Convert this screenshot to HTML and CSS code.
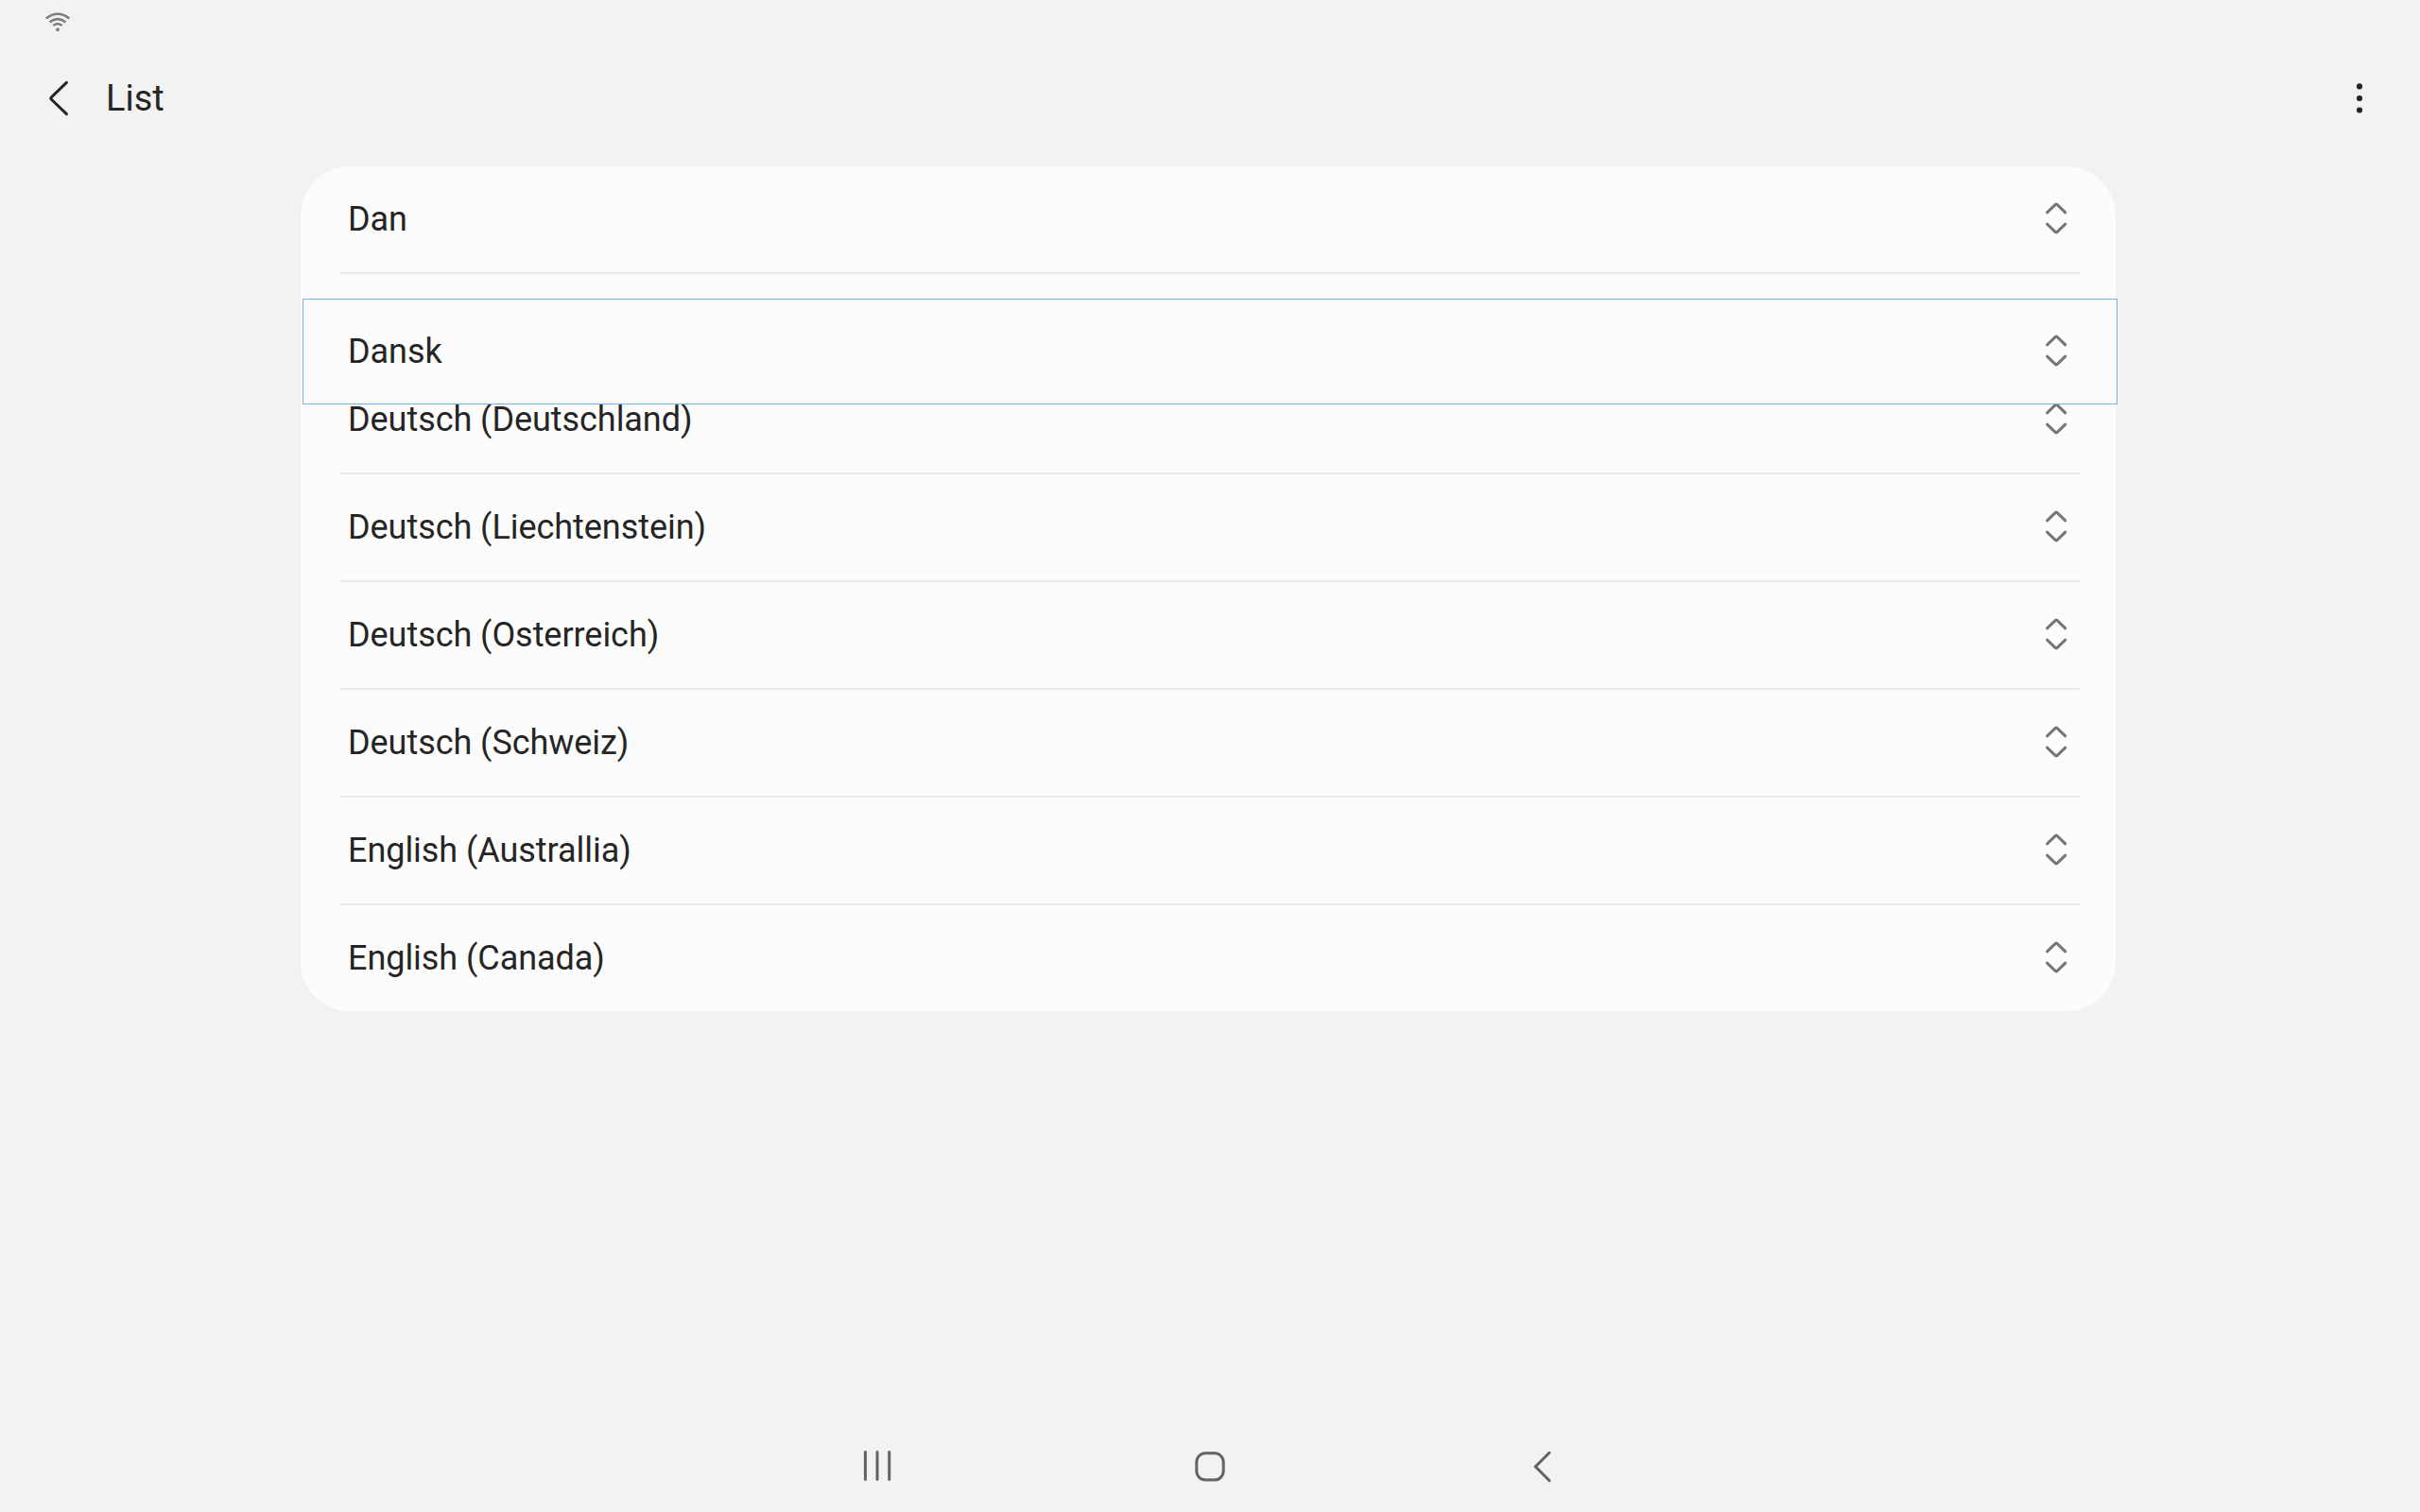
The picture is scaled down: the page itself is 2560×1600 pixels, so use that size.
FILE: index.html
```html
<!DOCTYPE html>
<html lang="en">
<head>
<meta charset="utf-8">
<title>List</title>
<link rel="stylesheet" href="styles.css">
</head>
<body>
<svg class="defs" aria-hidden="true">
  <symbol id="reorder" viewBox="0 0 48 48">
    <path d="M14.6 16.8 23.4 8.3Q24.2 7.6 25 8.3L33.8 16.8M14.6 29.1 23.4 37.6Q24.2 38.3 25 37.6L33.8 29.1"/>
  </symbol>
</svg>
<div class="screen">
  <div class="status">
    <svg class="wifi" viewBox="0 0 28 22">
      <path d="M1.8 7.6Q14-2 26.2 7.6M5.6 11.5Q14 4.8 22.4 11.5M9.3 15Q14 11.6 18.7 15"/>
      <circle cx="14" cy="19.3" r="1.9"/>
    </svg>
  </div>
  <header class="appbar">
    <svg class="back" viewBox="0 0 48 48"><path d="M30.4 7.4 14.4 22.8Q13.2 24 14.4 25.2L30.4 40.6"/></svg>
    <h1 class="title">List</h1>
    <svg class="more" viewBox="0 0 48 48"><circle cx="24" cy="11.4" r="3.1"/><circle cx="24" cy="24" r="3.1"/><circle cx="24" cy="36.5" r="3.1"/></svg>
  </header>
  <main class="content">
    <ul class="card">
      <li class="row"><span>Dan</span><svg class="handle"><use href="#reorder"/></svg></li>
      <li class="slot">
        <div class="dragged"><span>Dansk</span><svg class="handle"><use href="#reorder"/></svg></div>
      </li>
      <li class="row"><span>Deutsch (Deutschland)</span><svg class="handle"><use href="#reorder"/></svg></li>
      <li class="row"><span>Deutsch (Liechtenstein)</span><svg class="handle"><use href="#reorder"/></svg></li>
      <li class="row"><span>Deutsch (Osterreich)</span><svg class="handle"><use href="#reorder"/></svg></li>
      <li class="row"><span>Deutsch (Schweiz)</span><svg class="handle"><use href="#reorder"/></svg></li>
      <li class="row"><span>English (Australlia)</span><svg class="handle"><use href="#reorder"/></svg></li>
      <li class="row"><span>English (Canada)</span><svg class="handle"><use href="#reorder"/></svg></li>
    </ul>
  </main>
  <nav class="navbar">
    <svg class="nav-icon" viewBox="0 0 48 48"><path d="M11.4 9.5V38.5M24 9.5V38.5M36.7 9.5V38.5"/></svg>
    <svg class="nav-icon" viewBox="0 0 48 48"><rect x="9.8" y="10.7" width="28.4" height="28.4" rx="9.5"/></svg>
    <svg class="nav-icon" viewBox="0 0 48 48"><path d="M31 10.3 16.3 25 31 39.7"/></svg>
  </nav>
</div>
</body>
</html>
```

FILE: styles.css
```css
* { box-sizing: border-box; }

body {
  margin: 0;
  background: #f2f2f2;
  color: #252525;
  font-family: Roboto, sans-serif;
}

svg {
  display: block;
  flex: none;
}

.defs {
  position: absolute;
  width: 0;
  height: 0;
}

.screen {
  display: flex;
  flex-direction: column;
  width: 2560px;
  height: 1600px;
  overflow: hidden;
}

.status {
  height: 48px;
  padding: 12px 47px 0;
}

.wifi {
  width: 28px;
  height: 22px;
  fill: none;
  stroke: #7b7b7b;
  stroke-width: 2.5;
  stroke-linecap: butt;
}

.wifi circle {
  fill: #7b7b7b;
  stroke: none;
}

.appbar {
  display: flex;
  align-items: center;
  height: 112px;
  padding: 0 40px;
}

.back {
  width: 48px;
  height: 48px;
  fill: none;
  stroke: #252525;
  stroke-width: 3;
  stroke-linecap: round;
}

.title {
  flex: 1;
  margin: 0 0 0 24px;
  font-size: 38px;
  font-weight: 400;
  line-height: 44px;
}

.more {
  width: 48px;
  height: 48px;
  fill: #252525;
}

.content {
  flex: 1;
  padding: 16px 322px 0 318px;
}

.card {
  margin: 0;
  padding: 0;
  list-style: none;
  background: #fcfcfc;
  border-radius: 52px;
}

.row,
.dragged {
  display: flex;
  align-items: center;
  justify-content: space-between;
  font-size: 36px;
  line-height: 42px;
  letter-spacing: -0.05px;
}

.row {
  height: 114px;
  margin: 0 38px 0 42px;
  padding: 0 1px 0 8px;
  border-bottom: 2px solid #eaeaea;
}

.row:last-child {
  height: 112px;
  border-bottom: 0;
}

.handle {
  width: 48px;
  height: 48px;
  fill: none;
  stroke: #757575;
  stroke-width: 3;
  stroke-linecap: round;
}

.slot {
  position: relative;
  height: 98px;
}

.dragged {
  position: absolute;
  z-index: 1;
  top: 26px;
  left: 2px;
  width: 1920px;
  height: 112px;
  padding: 0 40px 0 47px;
  background: #fcfcfc;
  border: 1px solid #77b3ec;
}

.navbar {
  display: flex;
  justify-content: center;
  gap: 304px;
  height: 96px;
}

.nav-icon {
  width: 48px;
  height: 48px;
  margin-top: 23px;
  fill: none;
  stroke: #636363;
  stroke-width: 3;
  stroke-linecap: round;
}
```
